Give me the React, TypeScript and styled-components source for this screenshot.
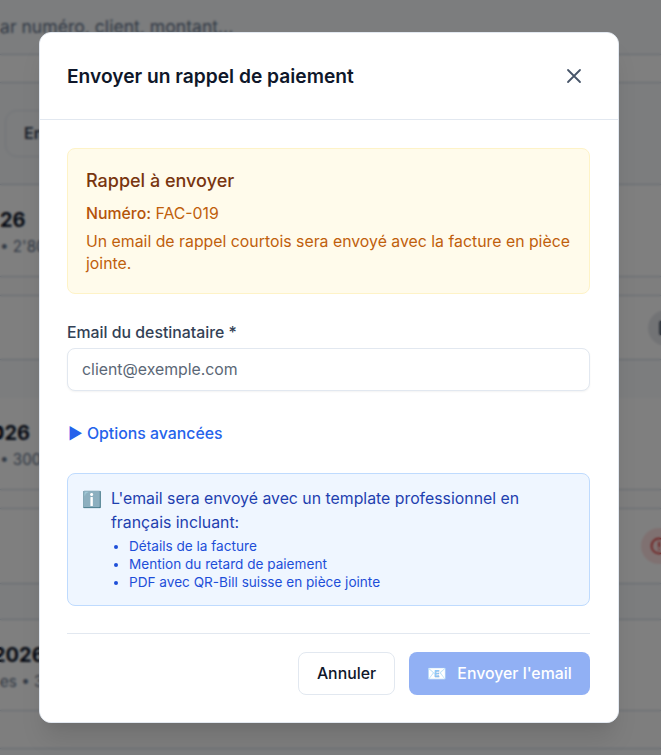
import React from "react";
import styled, { createGlobalStyle } from "styled-components";

const GlobalStyle = createGlobalStyle`
  html, body {
    margin: 0;
    padding: 0;
    height: 100%;
    overflow: hidden;
    font-family: Inter, "Liberation Sans", "Noto Sans", sans-serif;
    background: #f8fafc;
  }
  * { box-sizing: border-box; }
`;

const Page = styled.div`
  height: 755px;
  overflow: hidden;
  display: flex;
  flex-direction: column;
`;

const SearchRow = styled.div`
  height: 55px;
  flex: none;
  border-bottom: 1px solid #cbd5e1;
  padding-top: 15px;
  font-size: 17.6px;
  line-height: 24px;
  color: #64748b;
  white-space: nowrap;
`;

const Band = styled.div<{ $h: number; $bg?: string; $line?: boolean }>`
  height: ${(p) => p.$h}px;
  flex: none;
  background: ${(p) => p.$bg || "transparent"};
  border-bottom: ${(p) => (p.$line ? "1px solid #cbd5e1" : "none")};
`;

const Toolbar = styled.div`
  height: 102px;
  flex: none;
  padding: 27px 0 0 5px;
  border-bottom: 1px solid #cbd5e1;
`;

const FilterButton = styled.div`
  width: 120px;
  height: 47px;
  border: 1px solid #e2e8f0;
  border-radius: 12px;
  background: #f8fafc;
  padding-left: 18px;
  font-size: 16px;
  font-weight: 600;
  line-height: 45px;
  color: #334155;
`;

const CardHead = styled.div<{ $h: number }>`
  height: ${(p) => p.$h}px;
  flex: none;
  background: #ffffff;
  border-bottom: 1px solid #cbd5e1;
  padding-top: 22px;
  white-space: nowrap;
`;

const CardTitle = styled.div<{ $shift?: number }>`
  margin-left: ${(p) => p.$shift || 0}px;
  font-size: 20px;
  font-weight: 700;
  line-height: 26px;
  color: #0f172a;
`;

const CardMeta = styled.div`
  margin-top: 3px;
  font-size: 15.2px;
  line-height: 22px;
  color: #64748b;
`;

const ActionRow = styled.div<{ $h: number }>`
  height: ${(p) => p.$h}px;
  flex: none;
  background: #ffffff;
  border-bottom: 1px solid #cbd5e1;
  display: flex;
  align-items: center;
  justify-content: flex-end;
  overflow: hidden;
`;

const RoundAction = styled.div<{ $bg: string; $fg: string; $off: number }>`
  width: 36px;
  height: 36px;
  flex: none;
  border-radius: 50%;
  background: ${(p) => p.$bg};
  color: ${(p) => p.$fg};
  margin-right: ${(p) => p.$off}px;
  display: flex;
  align-items: center;
  padding-left: 9px;
`;

const Overlay = styled.div`
  position: fixed;
  inset: 0;
  padding-right: 3px;
  display: flex;
  align-items: center;
  justify-content: center;
`;

const Backdrop = styled.div`
  position: absolute;
  inset: 0;
  background: rgba(0, 0, 0, 0.5);
  backdrop-filter: blur(1px);
`;

const Modal = styled.div`
  position: relative;
  width: 580px;
  height: 691px;
  background: #ffffff;
  border: 1px solid #e2e8f0;
  border-radius: 12px;
  box-shadow: 0 20px 25px -5px rgba(0, 0, 0, 0.1), 0 10px 10px -5px rgba(0, 0, 0, 0.04);
  display: flex;
  flex-direction: column;
`;

const ModalHeader = styled.header`
  height: 87px;
  flex: none;
  padding: 0 27px;
  background: #ffffff;
  border-radius: 12px 12px 0 0;
  border-bottom: 1px solid #e2e8f0;
  display: flex;
  align-items: center;
  justify-content: space-between;
`;

const ModalTitle = styled.h2`
  margin: 0;
  font-size: 19.2px;
  font-weight: 600;
  color: #0f172a;
`;

const CloseButton = styled.button`
  width: 32px;
  height: 32px;
  padding: 0;
  margin-right: 1px;
  border: none;
  background: transparent;
  color: #475569;
  display: flex;
  align-items: center;
  justify-content: center;
  cursor: pointer;
`;

const ModalBody = styled.div`
  flex: 1;
  padding: 28px 28px 27px 27px;
  background: #ffffff;
  border-radius: 0 0 12px 12px;
  display: flex;
  flex-direction: column;
`;

const ReminderBox = styled.section`
  height: 146px;
  flex: none;
  padding: 18px 18px;
  background: #fffbeb;
  border: 1px solid #fef3c7;
  border-radius: 8px;
`;

const ReminderTitle = styled.h3`
  margin: 0 0 9px;
  font-size: 18px;
  font-weight: 500;
  line-height: 27px;
  color: #78350f;
`;

const ReminderLine = styled.p`
  margin: 0 0 6px;
  font-size: 15.84px;
  line-height: 22px;
  color: #bf5f0c;
  strong {
    font-weight: 500;
    color: #b45309;
  }
`;

const Field = styled.label`
  display: block;
  margin-top: 27px;
`;

const FieldLabel = styled.span`
  display: block;
  margin-bottom: 3px;
  font-size: 15.84px;
  font-weight: 500;
  line-height: 24px;
  color: #334155;
`;

const TextInput = styled.input`
  display: block;
  width: 100%;
  height: 43px;
  padding: 0 14px 1px;
  border: 1px solid #e2e8f0;
  border-radius: 8px;
  background: #ffffff;
  box-shadow: 0 1px 2px rgba(0, 0, 0, 0.05);
  font-family: inherit;
  font-size: 15.84px;
  color: #0f172a;
  &::placeholder { color: #5b6776; opacity: 1; }
`;

const Advanced = styled.details`
  margin-top: 31px;
  font-size: 15.84px;
  font-weight: 500;
  line-height: 24px;
  color: #2563eb;
  summary {
    cursor: pointer;
    list-style: none;
    padding-left: 1px;
  }
`;

const InfoBox = styled.aside`
  height: 133px;
  flex: none;
  margin-top: 27px;
  padding: 13px 14px;
  background: #eff6ff;
  border: 1px solid #bfdbfe;
  border-radius: 8px;
  display: flex;
  gap: 9px;
`;

const InfoIcon = styled.span`
  flex: none;
  font-size: 16px;
  line-height: 24px;
`;

const InfoText = styled.div`
  font-size: 15.84px;
  line-height: 24px;
  color: #1e40af;
`;

const InfoList = styled.ul`
  margin: 2px 0 0;
  padding-left: 18px;
  font-size: 13.6px;
  line-height: 18px;
  color: #1d4ed8;
`;

const ModalFooter = styled.footer`
  margin-top: 27px;
  padding-top: 18px;
  border-top: 1px solid #e2e8f0;
  display: flex;
  justify-content: flex-end;
  gap: 14px;
`;

const Button = styled.button<{ $primary?: boolean }>`
  height: 43px;
  width: ${(p) => (p.$primary ? 181 : 97)}px;
  padding: 0;
  border: 1px solid ${(p) => (p.$primary ? "transparent" : "#e2e8f0")};
  border-radius: 8px;
  background: ${(p) => (p.$primary ? "#2563eb" : "#ffffff")};
  color: ${(p) => (p.$primary ? "#ffffff" : "#0f172a")};
  opacity: ${(p) => (p.$primary ? 0.5 : 1)};
  font-family: inherit;
  font-size: 15.84px;
  font-weight: 500;
  display: flex;
  align-items: center;
  justify-content: center;
  gap: 10px;
`;

const App: React.FC = () => {
  return (
    <>
      <GlobalStyle />
      <Page>
        <SearchRow>ar numéro, client, montant...</SearchRow>
        <Band $h={28} $bg="#ffffff" $line />
        <Toolbar>
          <FilterButton>En</FilterButton>
        </Toolbar>
        <CardHead $h={92}>
          <CardTitle>26</CardTitle>
          <CardMeta>• 2'80</CardMeta>
        </CardHead>
        <Band $h={19} $bg="#fcfcfd" $line />
        <ActionRow $h={64}>
          <RoundAction $bg="#e5e7eb" $fg="#334155" $off={-23}>
            <svg width="18" height="18" viewBox="0 0 24 24" fill="none" stroke="currentColor" strokeWidth="2">
              <rect x="4" y="3" width="16" height="18" rx="2" />
            </svg>
          </RoundAction>
        </ActionRow>
        <Band $h={38} />
        <CardHead $h={92}>
          <CardTitle $shift={-9}>026</CardTitle>
          <CardMeta>• 300</CardMeta>
        </CardHead>
        <Band $h={19} $bg="#fcfcfd" $line />
        <ActionRow $h={75}>
          <RoundAction $bg="#fee2e2" $fg="#dc2626" $off={-16}>
            <svg width="18" height="18" viewBox="0 0 24 24" fill="none" stroke="currentColor" strokeWidth="2" strokeLinecap="round">
              <circle cx="12" cy="12" r="10" />
              <path d="M12 7v6M12 16.5v.5" />
            </svg>
          </RoundAction>
        </ActionRow>
        <Band $h={36} $line />
        <CardHead $h={91}>
          <CardTitle $shift={-7}>2026</CardTitle>
          <CardMeta>es • 3</CardMeta>
        </CardHead>
        <Band $h={38} $bg="#fcfcfd" $line />
      </Page>

      <Overlay>
        <Backdrop />
        <Modal>
          <ModalHeader>
            <ModalTitle>Envoyer un rappel de paiement</ModalTitle>
            <CloseButton aria-label="Fermer">
              <svg width="20" height="20" viewBox="0 0 20 20" fill="none" stroke="currentColor" strokeWidth="1.8" strokeLinecap="round">
                <path d="M4 4l12 12M16 4L4 16" />
              </svg>
            </CloseButton>
          </ModalHeader>
          <ModalBody>
            <ReminderBox>
              <ReminderTitle>Rappel à envoyer</ReminderTitle>
              <ReminderLine>
                <strong>Numéro:</strong> FAC-019
              </ReminderLine>
              <ReminderLine>
                Un email de rappel courtois sera envoyé avec la facture en pièce jointe.
              </ReminderLine>
            </ReminderBox>
            <Field>
              <FieldLabel>Email du destinataire *</FieldLabel>
              <TextInput placeholder="client@exemple.com" />
            </Field>
            <Advanced>
              <summary>▶ Options avancées</summary>
            </Advanced>
            <InfoBox>
              <InfoIcon>ℹ️</InfoIcon>
              <InfoText>
                L'email sera envoyé avec un template professionnel en français incluant:
                <InfoList>
                  <li>Détails de la facture</li>
                  <li>Mention du retard de paiement</li>
                  <li>PDF avec QR-Bill suisse en pièce jointe</li>
                </InfoList>
              </InfoText>
            </InfoBox>
            <ModalFooter>
              <Button>Annuler</Button>
              <Button $primary disabled>
                <span>📧</span>
                Envoyer l'email
              </Button>
            </ModalFooter>
          </ModalBody>
        </Modal>
      </Overlay>
    </>
  );
};

export default App;
